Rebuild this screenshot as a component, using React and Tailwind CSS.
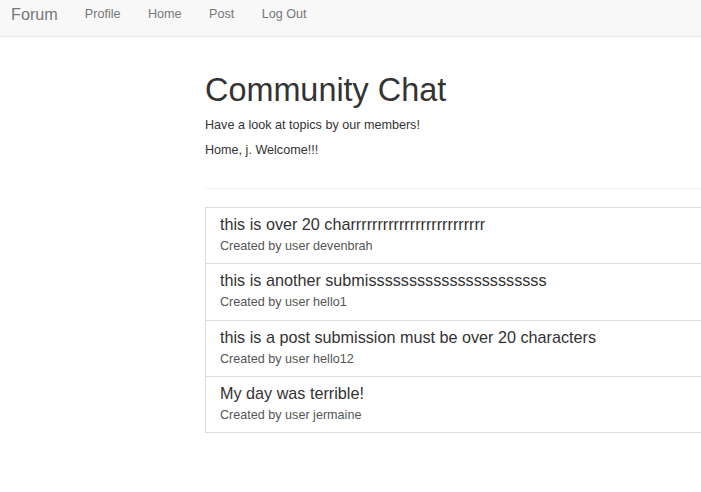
import React from "react";

const posts = [
  { title: "this is over 20 charrrrrrrrrrrrrrrrrrrrrrrrr", user: "devenbrah" },
  { title: "this is another submissssssssssssssssssssss", user: "hello1" },
  { title: "this is a post submission must be over 20 characters", user: "hello12" },
  { title: "My day was terrible!", user: "jermaine" },
];

export default function App() {
  return (
    <div className="w-[701px] h-[492px] overflow-hidden bg-white text-[#333] font-['Liberation_Sans',Arial,sans-serif]">
      <nav className="h-[37px] flex items-start bg-[#f8f8f8] border-b border-[#e7e7e7] pl-[11px]">
        <a className="pt-[5px] text-[16.2px] leading-[18px] text-[#777]">Forum</a>
        <ul className="flex gap-[27.5px] ml-[27px] pt-[5px] text-[12.6px] leading-[18px] text-[#777]">
          <li>Profile</li>
          <li>Home</li>
          <li>Post</li>
          <li>Log Out</li>
        </ul>
      </nav>

      <main className="pl-[205px]">
        <div className="w-[600px]">
          <h1 className="mt-[35px] text-[32.4px] leading-[36px] text-[#333]">Community Chat</h1>
          <p className="mt-[8px] text-[12.6px] leading-[18px]">Have a look at topics by our members!</p>
          <p className="mt-[7px] text-[12.6px] leading-[18px]">Home, j. Welcome!!!</p>
          <hr className="mt-[29px] border-t border-[#eee]" />

          <ul className="mt-[18px] border-b border-[#ddd]">
            {posts.map((p, i) => (
              <li
                key={p.user}
                className={i === 1 ? "border border-b-0 border-[#ddd] px-[14px] pt-[6px] pb-[9px]" : "border border-b-0 border-[#ddd] px-[14px] pt-[6px] pb-[8px]"}
              >
                <div className="text-[16.2px] leading-[20px] text-[#333]">{p.title}</div>
                <div className="mt-[3px] text-[12.6px] leading-[18px] text-[#555]">Created by user {p.user}</div>
              </li>
            ))}
          </ul>
        </div>
      </main>
    </div>
  );
}
